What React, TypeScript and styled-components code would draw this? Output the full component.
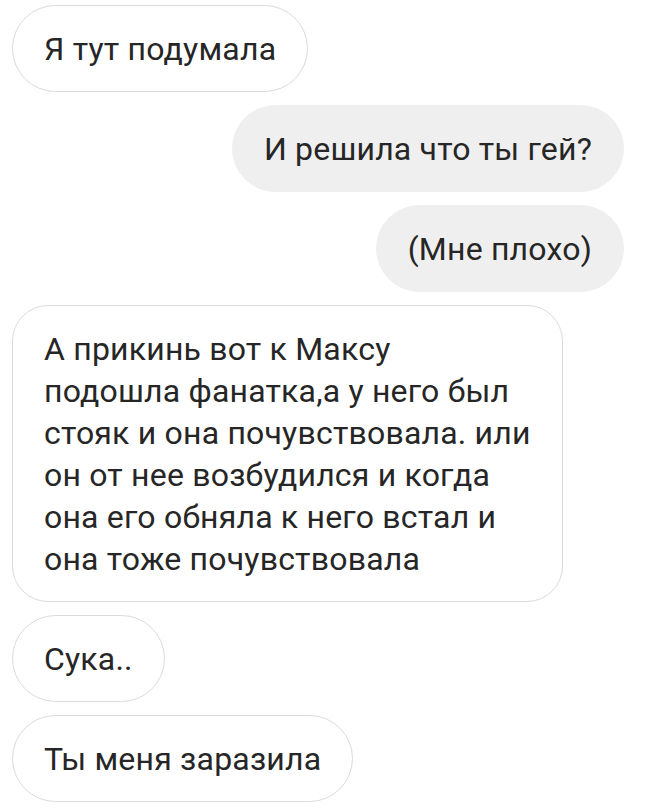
import React from "react";
import styled, { createGlobalStyle } from "styled-components";

const Global = createGlobalStyle`
  html, body { margin: 0; padding: 0; background: #ffffff; }
  body { font-family: "Roboto", "Liberation Sans", sans-serif; }
`;

const Thread = styled.div`
  display: flex;
  flex-direction: column;
  gap: 13px;
  padding: 5px 25px 6px 12px;
  width: 649px;
  box-sizing: border-box;
`;

const Row = styled.div<{ $mine?: boolean }>`
  display: flex;
  justify-content: ${(p) => (p.$mine ? "flex-end" : "flex-start")};
`;

const Bubble = styled.div<{ $mine?: boolean; $multi?: boolean }>`
  box-sizing: border-box;
  padding: 21.5px 31px;
  border-radius: ${(p) => (p.$multi ? "36px" : "44px")};
  border: 1px solid ${(p) => (p.$mine ? "#efefef" : "#dbdbdb")};
  background: ${(p) => (p.$mine ? "#efefef" : "#ffffff")};
  color: #262626;
  font-size: 32px;
  line-height: 42px;
  letter-spacing: 0.2px;
  white-space: pre;
`;

const messages: { text: string; mine?: boolean; multi?: boolean }[] = [
  { text: "Я тут подумала" },
  { text: "И решила что ты гей?", mine: true },
  { text: "(Мне плохо)", mine: true },
  {
    text: "А прикинь вот к Максу\nподошла фанатка,а у него был\nстояк и она почувствовала. или\nон от нее возбудился и когда\nона его обняла к него встал и\nона тоже почувствовала",
    multi: true,
  },
  { text: "Сука.." },
  { text: "Ты меня заразила" },
];

export default function App() {
  return (
    <>
      <Global />
      <Thread>
        {messages.map((m, i) => (
          <Row key={i} $mine={m.mine}>
            <Bubble $mine={m.mine} $multi={m.multi}>
              {m.text}
            </Bubble>
          </Row>
        ))}
      </Thread>
    </>
  );
}
